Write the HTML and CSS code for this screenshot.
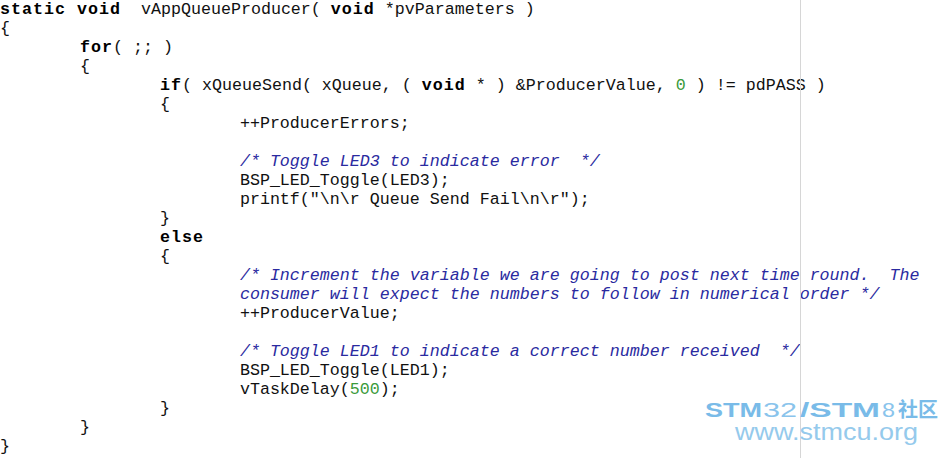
FILE: index.html
```html
<!DOCTYPE html>
<html>
<head>
<meta charset="utf-8">
<link rel="stylesheet" href="styles.css">
</head>
<body>
<div class="editor">
<pre class="code"><b class="kw">static void</b>  vAppQueueProducer( <b class="kw">void</b> *pvParameters )
{
	<b class="kw">for</b>( ;; )
	{
		<b class="kw">if</b>( xQueueSend( xQueue, ( <b class="kw">void</b> * ) &amp;ProducerValue, <span class="num">0</span> ) != pdPASS )
		{
			++ProducerErrors;

			<i class="cm">/* Toggle LED3 to indicate error  */</i>
			BSP_LED_Toggle(LED3);
			printf("\n\r Queue Send Fail\n\r");
		}
		<b class="kw">else</b>
		{
			<i class="cm">/* Increment the variable we are going to post next time round.  The
			consumer will expect the numbers to follow in numerical order */</i>
			++ProducerValue;

			<i class="cm">/* Toggle LED1 to indicate a correct number received  */</i>
			BSP_LED_Toggle(LED1);
			vTaskDelay(<span class="num">500</span>);
		}
	}
}</pre>
<div class="guide"></div>
<svg class="wm" width="242" height="50" viewBox="0 0 242 50">
  <text class="wm-b" x="5" y="22" textLength="57" lengthAdjust="spacingAndGlyphs">STM</text>
  <text class="wm-r" x="63" y="22" textLength="34" lengthAdjust="spacingAndGlyphs">32</text>
  <text class="wm-b" x="100" y="22" textLength="80" lengthAdjust="spacingAndGlyphs">/STM</text>
  <text class="wm-r" x="182" y="22" textLength="13" lengthAdjust="spacingAndGlyphs">8</text>
  <text class="wm-c" x="198" y="22" textLength="40" lengthAdjust="spacingAndGlyphs">社区</text>
  <text class="wm-u" x="35" y="45" textLength="183" lengthAdjust="spacingAndGlyphs">www.stmcu.org</text>
</svg>
</div>
</body>
</html>
```
FILE: styles.css
```css
html, body {
  margin: 0;
  padding: 0;
  background: #ffffff;
}

.editor {
  position: relative;
  width: 942px;
  height: 458px;
  overflow: hidden;
  background: #ffffff;
}

.code {
  margin: 0;
  padding: 0;
  font-family: "Liberation Mono", "DejaVu Sans Mono", monospace;
  font-size: 16.664px;
  line-height: 19px;
  color: #111111;
  tab-size: 8;
  -moz-tab-size: 8;
  white-space: pre;
}

.kw {
  font-weight: bold;
  letter-spacing: 1px;
  color: #000000;
}

.cm {
  font-style: italic;
  color: #2a2aa0;
}

.num {
  color: #3a9a3a;
}

.guide {
  position: absolute;
  left: 800px;
  top: 0;
  width: 1px;
  height: 458px;
  background: #d6d6d6;
}

.wm {
  position: absolute;
  left: 700px;
  top: 395px;
}

.wm text {
  font-family: "Liberation Sans", Arial, sans-serif;
}

.wm-b {
  font-size: 21px;
  font-weight: bold;
  fill: #79bbe8;
}

.wm-r {
  font-size: 21px;
  fill: #8ac4ec;
}

.wm-c {
  font-family: "Noto Sans CJK SC", sans-serif !important;
  font-size: 20px;
  font-weight: bold;
  fill: #79bbe8;
}

.wm-u {
  font-size: 23px;
  fill: #95caec;
}
```
